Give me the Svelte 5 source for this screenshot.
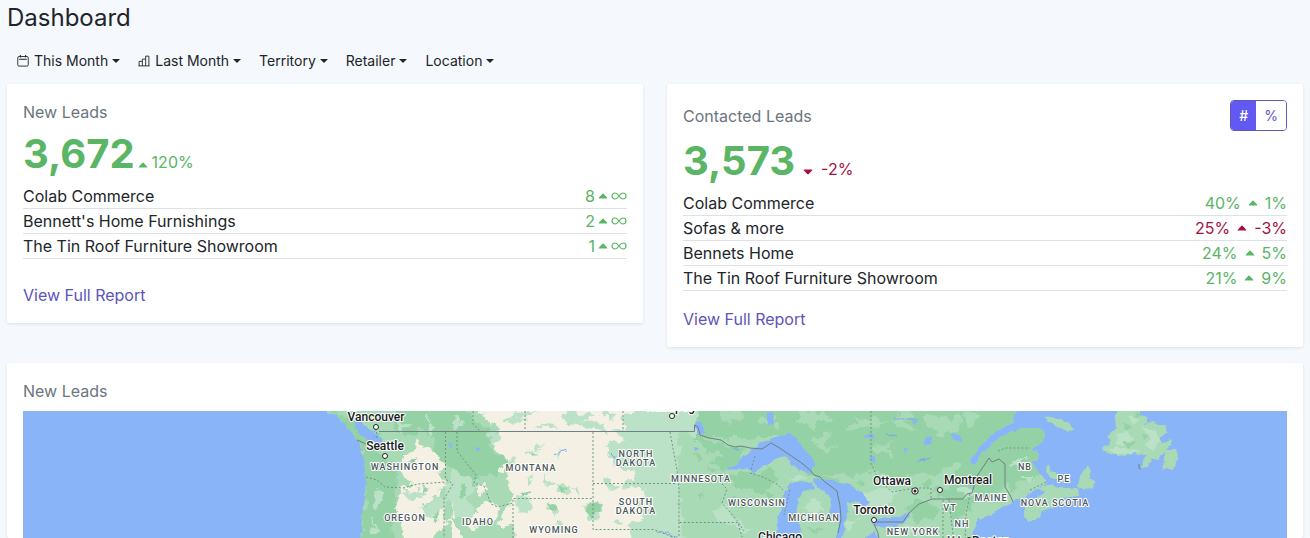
<script>
  let mode = $state('#');

  const filters = [
    { label: 'This Month', icon: 'calendar' },
    { label: 'Last Month', icon: 'bars' },
    { label: 'Territory' },
    { label: 'Retailer' },
    { label: 'Location' }
  ];

  const newLeads = [
    { name: 'Colab Commerce', value: '8' },
    { name: "Bennett's Home Furnishings", value: '2' },
    { name: 'The Tin Roof Furniture Showroom', value: '1' }
  ];

  const contacted = [
    { name: 'Colab Commerce', value: '40%', change: '1%' },
    { name: 'Sofas & more', value: '25%', change: '-3%', bad: true },
    { name: 'Bennets Home', value: '24%', change: '5%' },
    { name: 'The Tin Roof Furniture Showroom', value: '21%', change: '9%' }
  ];

  const states = [
    ['WASHINGTON', 405, 470],
    ['OREGON', 405, 521],
    ['IDAHO', 478, 525],
    ['MONTANA', 531, 471],
    ['WYOMING', 554, 533],
    ['NORTH', 636, 457],
    ['DAKOTA', 636, 466],
    ['SOUTH', 636, 505],
    ['DAKOTA', 636, 514],
    ['MINNESOTA', 701, 482],
    ['WISCONSIN', 757, 506],
    ['MICHIGAN', 814, 521],
    ['NEW YORK', 913, 535],
    ['VT', 950, 511],
    ['NH', 962, 527],
    ['MAINE', 991, 501],
    ['NB', 1025, 470],
    ['PE', 1064, 482],
    ['NOVA SCOTIA', 1055, 506],
    ['MA', 955, 543]
  ];

  const cities = [
    ['Vancouver', 376, 421, 376, 427],
    ['Seattle', 385, 450, 385, 456],
    ['Winnipeg', 670, 411, 672, 416],
    ['Ottawa', 892, 485, 915, 491],
    ['Montreal', 968, 484, 940, 490],
    ['Toronto', 874, 514, 874, 520],
    ['Chicago', 780, 541, 802, 546],
    ['Boston', 991, 545, 969, 540]
  ];
</script>

{#snippet triangle(down)}
  <svg class="tri" viewBox="0 0 10 6" aria-hidden="true">
    <path d={down ? 'M1 .5H9Q9.7.8 9 1.6L5.8 5Q5 5.8 4.2 5L1 1.6Q.3.8 1 .5Z' : 'M1 5.5H9Q9.7 5.2 9 4.4L5.8 1Q5 .2 4.2 1L1 4.4Q.3 5.2 1 5.5Z'} fill="currentColor" />
  </svg>
{/snippet}

<main>
  <h1>Dashboard</h1>

  <nav aria-label="Filters">
    {#each filters as f}
      <button type="button" class="filter">
        {#if f.icon === 'calendar'}
          <svg class="icon" viewBox="0 0 16 16" aria-hidden="true" fill="none" stroke="currentColor" stroke-width="1.2">
            <rect x="1" y="2" width="14" height="12.8" rx="1.8" />
            <path d="M3.500 5.6H12.500M4.5.4V2.6M11.5.4V2.6" stroke-width="1.4" stroke-linecap="round" />
          </svg>
        {:else if f.icon === 'bars'}
          <svg class="icon" viewBox="0 0 16 16" aria-hidden="true" fill="none" stroke="currentColor" stroke-width="1.2">
            <path d="M1.500 14.500V8.500H5.800M5.800 14.500V5.500H10.200V14.500M10.200 5.500V1.500H14.500V14.500M.5 14.500H15.500" />
          </svg>
        {/if}
        <span>{f.label}</span><i class="caret"></i>
      </button>
    {/each}
  </nav>

  <div class="cards">
    <section class="card">
      <h2>New Leads</h2>
      <p class="total"><strong>3,672</strong><span class="delta tight">{@render triangle(false)}120%</span></p>
      <table>
        <tbody>
          {#each newLeads as row}
            <tr>
              <td>{row.name}</td>
              <td class="num">
                <span class="stat close">{row.value}{@render triangle(false)}
                  <svg class="inf" viewBox="0 0 16 8" role="img" aria-label="infinite">
                    <path d="M8 4C6.4 1.8 5.3 1 4 1A3 3 0 0 0 4 7C5.3 7 6.4 6.2 8 4C9.6 1.8 10.7 1 12 1A3 3 0 0 1 12 7C10.7 7 9.6 6.2 8 4Z" fill="none" stroke="currentColor" stroke-width="1.2" />
                  </svg>
                </span>
              </td>
            </tr>
          {/each}
        </tbody>
      </table>
      <a class="lower" href="#new-leads">View Full Report</a>
    </section>

    <section class="card">
      <div class="head">
        <h2>Contacted Leads</h2>
        <div class="toggle" role="group" aria-label="Unit">
          <button type="button" class:on={mode === '#'} aria-pressed={mode === '#'} onclick={() => (mode = '#')}>#</button>
          <button type="button" class:on={mode === '%'} aria-pressed={mode === '%'} onclick={() => (mode = '%')}>%</button>
        </div>
      </div>
      <p class="total"><strong>3,573</strong><span class="delta bad">{@render triangle(true)}-2%</span></p>
      <table>
        <tbody>
          {#each contacted as row}
            <tr>
              <td>{row.name}</td>
              <td class="num"><span class="stat" class:bad={row.bad}>{row.value}{@render triangle(false)}{row.change}</span></td>
            </tr>
          {/each}
        </tbody>
      </table>
      <a href="#contacted-leads">View Full Report</a>
    </section>
  </div>

  <section class="card map-card">
    <h2>New Leads</h2>
    <svg class="map" viewBox="23 411 1264 127" preserveAspectRatio="xMidYMin slice" role="img" aria-label="Map of new leads">
      <defs>
        <clipPath id="land">
          <path d="M325 405L328 412L337 416L345 425L354 434L360 443L360 450L364 461L366 477L365 497L362 518L360 545H971L973 531L979 519L991 515L1004 507L1014 501L1024 497L1036 490L1047 482L1040 475L1036 467L1031 462L1038 458L1039 452L1029 450L1042 443L1045 433L1038 428L1024 428L1012 431L996 440L982 453L972 466L970 461L980 447L996 431L1012 423L1019 405Z" />
        </clipPath>
        <filter id="rugged" x="-5%" y="-5%" width="110%" height="110%">
          <feTurbulence type="fractalNoise" baseFrequency="0.09" numOctaves="3" seed="4" result="noise" />
          <feDisplacementMap in="SourceGraphic" in2="noise" scale="14" xChannelSelector="R" yChannelSelector="G" />
        </filter>
        <filter id="coast" x="-5%" y="-5%" width="110%" height="110%">
          <feTurbulence type="fractalNoise" baseFrequency="0.15" numOctaves="2" seed="9" result="noise" />
          <feDisplacementMap in="SourceGraphic" in2="noise" scale="5" xChannelSelector="R" yChannelSelector="G" />
        </filter>
      </defs>
      <rect x="-400" y="400" width="2200" height="800" fill="#8ab4f8" />
      <g filter="url(#coast)">
      <g clip-path="url(#land)">
        <rect x="300" y="400" width="800" height="160" fill="#a8dab5" />
        <g filter="url(#rugged)">
        <path d="M690 400H1060V470L970 500L820 484L777 437L695 437Z" fill="#94d2a5" />
        <path d="M575 400H697L698 436L680 431L678 460L683 550H590Z" fill="#bbe2c6" />

        <!-- northern plains and basin -->
        <g fill="#f5f0e4">
          <path d="M471 400H640L633 416L620 418L627 428L614 431L625 442L613 441L606 448L618 455L611 465L625 470L636 468L632 484L622 481L625 489L642 487L648 503L640 506L646 518L628 525L632 550H510L516 523L505 530L496 526L509 505L514 493L504 489L509 471L494 468L505 458L491 443L500 430L488 422Z" />
          <path d="M417 434L422 450L435 448L441 460L446 466L438 473L444 482L427 486L408 481L402 467L407 455L412 449Z" />
          <path d="M398 490L414 483L432 482L447 484L436 490L441 497L423 503L436 511L430 518L443 508L447 526L437 532V550H407L405 525L396 512Z" />
          <path d="M450 500L459 508L451 520ZM475 488L485 482L486 492L478 498ZM474 512L488 503L499 510L493 522L482 519L474 529L468 519Z" />
          <path d="M470 457L476 450L482 452L477 464ZM449 520L453 550H463L460 529Z" />
        </g>
        <!-- forested ranges -->
        <path d="M328 409L344 417L360 423L381 435L377 450L391 460L399 477L392 493L397 511L391 530L399 550H360L366 497L362 450Z" fill="#94d2a5" />
        <path d="M396 408H464L476 424L491 431L488 449L508 461L494 474L480 472L475 487L460 482L451 466L440 462L437 445L428 435L420 424L408 439L395 430Z" fill="#94d2a5" />
        <path d="M451 466L469 477L475 487L465 499L475 508L467 526L453 512L446 486Z" fill="#bbe2c6" />
        <g fill="#bbe2c6">
          <path d="M379 488L386 493L383 503L377 510L372 506L375 493ZM371 520L378 529L373 539L370 532Z" />
          <path d="M397 417L411 425L402 436ZM427 414L434 426L430 438ZM452 414L465 424L455 430ZM483 433L501 435L493 445ZM400 492L427 493L413 502ZM420 509L441 497L450 500L431 517Z" />
          <path d="M559 415L573 411L595 414L584 421L604 423L607 431L586 429L567 424ZM602 413L608 421L615 414ZM510 426L527 421L520 418L539 412L524 411L505 419ZM533 425L547 430L558 426ZM610 438L622 446L617 465L604 452ZM561 482L572 486L566 496L558 491ZM549 500L560 507L556 519L548 512ZM585 501L600 503L602 519L590 523L584 511ZM526 451L536 448L541 455L532 458ZM537 443L544 444L540 449ZM556 453L562 447L560 461ZM504 459L509 456L514 462L507 466ZM542 474L557 484L549 486ZM601 477L617 485L609 490ZM525 475L535 479L529 484ZM518 497L533 500L528 517L519 512ZM616 501L624 501L620 508ZM572 489L578 487L576 495ZM611 521L624 522L617 529ZM559 520L568 529L558 533Z" />
        </g>
        <g fill="#94d2a5">
          <path d="M587 503L597 504L601 512L593 518L585 510ZM550 501L557 507L553 516L549 507ZM530 453L540 452L536 456ZM521 490L529 491L523 499ZM562 486L568 489L563 494ZM423 486L431 489L420 493ZM459 485L466 489L461 500ZM418 456L412 463L416 466ZM439 511L432 518L438 522Z" />
          <path d="M698 437L719 442L745 450L728 470L711 463L723 455L704 451ZM724 475L747 474L769 467L780 481L763 493L737 487ZM918 500L937 505L933 518L918 521L909 510ZM948 497L962 499L974 477L986 460L1000 464L996 481L983 495L966 511L957 525L950 512ZM1000 438L1020 429L1041 430L1038 440L1019 446L1004 449Z" />
        </g>
        <g fill="#a8dab5">
          <path d="M720 409L745 413L739 421L719 419ZM798 411L823 413L833 420L819 420L813 430L795 421ZM846 427L867 418L888 420L876 431L861 429ZM899 411L915 413L906 423L921 426L912 431L894 423ZM925 419L940 415L959 419L957 430L943 434L928 428ZM875 445L893 441L887 449L898 454L878 454ZM813 438L832 433L826 444L839 448L820 450ZM762 416L779 418L773 427L759 423ZM964 411L978 413L972 425L962 419Z" />
          <path d="M820 475L857 476L865 469L896 480L933 473L956 463L963 467L949 484L929 494L908 500L889 512L868 518L852 510L849 497L863 490L841 481Z" />
        </g>
        <g fill="#bbe2c6">
          <path d="M867 493L882 488L899 491L888 505L872 511L853 512L855 504ZM756 455L766 448L762 458ZM779 475L791 478L798 474L812 480L798 481ZM711 510L727 506L735 519L752 530L741 534L725 524ZM799 506L808 499L819 500L824 509L814 515ZM845 521L859 520L852 530ZM892 529L914 526L935 530L920 536ZM958 491L967 487L974 490L964 498ZM1006 464L1016 458L1028 458L1021 466ZM1020 475L1034 475L1028 482Z" />
        </g>
        <g fill="#94d2a5">
          <path d="M734 499L748 502L741 509L732 505ZM764 492L774 495L768 503ZM695 493L707 492L702 500ZM805 529L821 524L817 531ZM858 482L867 484L862 489ZM918 484L933 479L928 488ZM1024 433L1031 434L1025 438ZM1009 486L1018 483L1014 492ZM693 452L703 456L697 463ZM706 468L719 470L711 475Z" />
        </g>
        </g>

        <!-- lakes and inlets -->
        <g fill="#8ab4f8">
          <path d="M353 421L360 421L370 430L377 433L383 440L378 448L374 441L366 439L357 432Z" />
          <path d="M728 470L741 459L751 451L761 443L775 437L789 434L796 437L802 447L808 453L815 462L811 474L798 469L790 464L785 455L773 460L763 467L752 473L747 468Z" />
          <path d="M776 545L777 522L781 508L784 492L790 485L800 481L812 483L814 488L803 492L798 500L796 515L801 528L798 545Z" />
          <path d="M813 478L828 480L848 484L860 491L869 502L864 508L858 502L848 501L847 516L844 529L840 545H834L839 526L838 517L829 514L832 503L827 494L816 486Z" />
          <path d="M872 522L884 517L900 517L909 512L910 516L903 523L892 527L876 526Z" />
          <path d="M767 411L773 412L774 424L768 425ZM694 425L700 421L704 433L698 435ZM693 447L698 448L695 451ZM475 449L480 448L478 453ZM450 444L453 444L451 449ZM864 435L875 435L875 439L864 438ZM869 454L875 456L874 463L870 460ZM951 433L960 435L961 441L954 440ZM924 438L933 435L930 444L925 445ZM911 421L920 418L914 424ZM969 484L974 480L972 487ZM903 451L909 447L906 453ZM862 539L875 531L878 535L875 545Z" />
        </g>
        <g fill="none" stroke="#79a5ee" stroke-width="1">
          <path d="M552 455L559 453L563 450L567 451M612 454L618 461M655 531L665 532L672 536L680 540M375 424L374 439M894 419L916 419M918 461L931 458M733 449L740 449M886 434L898 436" />
        </g>
      </g>

      <!-- islands and peninsulas -->
      <g fill="#a8dab5">
        <path d="M1037 489L1050 484L1062 488L1078 488L1079 496L1067 497L1058 505L1043 512L1034 521L1028 521L1024 515L1024 505L1035 499L1046 492Z" />
        <path d="M1078 487L1080 476L1088 465L1091 471L1088 479L1096 481L1093 487L1083 491Z" />
        <path d="M1047 466L1049 464L1050 470L1057 474L1065 478L1063 482L1053 478L1046 472Z" />
        <path d="M1044 417L1051 416L1063 420L1074 429L1070 431L1057 427Z" />
        <path d="M1120 405H1144L1139 415L1148 417L1145 424L1153 421L1156 425L1165 425L1168 432L1160 437L1163 443L1172 439L1172 443L1166 449L1176 449L1178 455L1174 471L1168 468L1161 470L1165 460L1165 452L1158 460L1152 458L1147 467L1140 468L1146 455L1134 453L1118 456L1108 453L1102 450L1111 441L1108 437L1116 427L1115 419Z" />
      </g>
      <path d="M1117 434L1127 431L1134 439L1127 446L1115 445ZM1127 416L1139 418L1133 426ZM1141 427L1155 430L1160 441L1153 451L1144 444L1151 438ZM1106 449L1117 447L1142 452L1117 454Z" fill="#bbe2c6" />
      <path d="M1123 422L1133 429L1125 430ZM1136 411L1143 416L1135 417ZM1143 434L1149 436L1143 440ZM1123 441L1135 442L1128 449Z" fill="#94d2a5" />
      </g>

      <!-- borders -->
      <g fill="none" stroke="#6e8180" stroke-width="1">
        <path d="M357 440L366 444M379 431.500H694.500V425L698 427L700 435L709 438L721 440L728 445L735 447L741 446L750 448L762 449L771 443L778 447L790 455L803 464L811 471L814 475L820 477L825 482L837 491L840 506L841 519L838 533M874 524L878 533L880 545M876 522H903L909 513L919 504L932 499H963L967 494L972 493L977 476L989 458L992 462L999 459L1005 464V487L1010 495L1013 502M1139 464V468L1141 469" />
        <g stroke-dasharray="2 2" stroke="#719383">
          <path d="M376 428L377 439M366 477L377 480L385 487L403 488L418 484L446 482M445.500 432V479L453 484L444 499V545M457 432V451L476 475L474 483L484 486L491 504L498 507L513 503V498.500H593.500M593 432V529.500H654L675 538M593 483.500H676M670 432L677 470L679 489V522.500H738L742 537M679 522V545M513 504V545M473 411V424L480 431M525 411V431M623 411V431M871 411V463L878 479L892 492L915 488H931V499M943 500V545M970 494L966 515L965 545M953 534L949 500M998 451L1006 448L1030 448M722 484L727 489L722 503L736 519L744 531M750 473L763 477L777 484L783 490M755 456L751 470M790 490L784 515M1030 490L1046 482" />
        </g>
      </g>

      <g class="state">
        {#each states as [name, x, y]}
          <text {x} {y}>{name}</text>
        {/each}
      </g>
      <g class="city">
        {#each cities as [name, x, y, cx, cy]}
          <text {x} {y}>{name}</text>
          <circle {cx} {cy} r="2.500" fill="#fff" stroke="#222" />
          {#if name === 'Ottawa'}
            <circle {cx} {cy} r="3.200" fill="#fff" stroke="#222" />
            <circle {cx} {cy} r="1.500" fill="#222" />
          {/if}
        {/each}
      </g>
    </svg>
  </section>
</main>

<style>
  :global(body) {
    margin: 0;
    background: #f5f8fc;
  }
  main {
    box-sizing: border-box;
    min-height: 100vh;
    display: flex;
    flex-direction: column;
    padding: 3px 7px 0;
    font: 16px/24px Inter, sans-serif;
    color: #212529;
  }
  h1 {
    margin: 0 0 14px;
    font-size: 24px;
    line-height: 29px;
    font-weight: 400;
  }
  h2 {
    margin: 0;
    font-size: 16px;
    font-weight: 400;
    color: #6c757d;
  }
  nav {
    display: flex;
    flex-wrap: wrap;
    margin-bottom: 8px;
    padding-left: 1px;
  }
  button {
    font: inherit;
    cursor: pointer;
  }
  .filter {
    display: flex;
    align-items: center;
    padding: 4px 8px;
    border: 1px solid transparent;
    background: none;
    font-size: 14px;
    line-height: 20px;
    color: #212529;
  }
  .icon {
    width: 12px;
    height: 12px;
    margin-right: 5px;
  }
  .caret {
    margin-left: 4px;
    border: 4px solid transparent;
    border-top-color: currentColor;
    border-bottom: 0;
  }
  .cards {
    display: grid;
    grid-template-columns: 1fr 1fr;
    align-items: start;
    gap: 24px;
    margin-bottom: 16px;
  }
  .card {
    padding: 16px;
    background: #fff;
    border-radius: 2px;
    box-shadow: 0 1px 3px rgba(50, 60, 100, 0.12);
  }
  .head {
    display: flex;
    align-items: center;
    justify-content: space-between;
  }
  .toggle {
    display: flex;
    border: 1px solid #5f58b8;
    border-radius: 4px;
    overflow: hidden;
  }
  .toggle button {
    padding: 4px 8px;
    border: 0;
    background: #fff;
    color: #5d55c4;
    font-size: 14px;
    line-height: 21px;
  }
  .toggle .on {
    background: #6259f3;
    color: #fff;
    font-weight: 500;
  }
  .total {
    margin: 0;
    display: flex;
    align-items: baseline;
    height: 60px;
    line-height: 60px;
    color: #5ab565;
  }
  .total strong {
    font-size: 40px;
    font-weight: 700;
  }
  .delta {
    display: flex;
    align-items: baseline;
    gap: 8px;
    margin-left: 8px;
    line-height: 24px;
  }
  .delta :global(.tri) {
    margin-bottom: 3px;
  }
  .tight {
    gap: 4px;
    margin-left: 3px;
  }
  .tri {
    width: 10px;
    height: 6px;
    flex: none;
  }
  .inf {
    width: 16px;
    height: 8px;
  }
  table {
    width: 100%;
    border-collapse: separate;
    border-spacing: 0;
    margin-bottom: 16px;
  }
  td {
    padding: 0;
    border-bottom: 1px solid #dee2e6;
  }
  .num {
    text-align: right;
  }
  .stat {
    display: flex;
    justify-content: flex-end;
    align-items: center;
    gap: 7px;
    color: #5ab565;
  }
  .close {
    gap: 3px;
  }
  .bad {
    color: #a3123f;
  }
  a {
    display: block;
    width: max-content;
    color: #5d55b9;
    text-decoration: none;
  }
  .lower {
    margin-top: 24px;
  }
  .map-card {
    flex: 1;
    display: flex;
    flex-direction: column;
    gap: 8px;
    padding-bottom: 0;
  }
  .map {
    display: block;
    width: 100%;
    flex: 1 0 0;
    min-height: 120px;
  }
  .map text {
    font-family: Roboto, sans-serif;
    text-anchor: middle;
    paint-order: stroke;
    stroke: #fff;
    stroke-linejoin: round;
  }
  .state text {
    font-size: 9px;
    font-weight: 500;
    letter-spacing: 1px;
    fill: #4b5758;
    stroke-width: 2px;
  }
  .city text {
    font-size: 12px;
    font-weight: 500;
    fill: #16191c;
    stroke-width: 2px;
  }
</style>
